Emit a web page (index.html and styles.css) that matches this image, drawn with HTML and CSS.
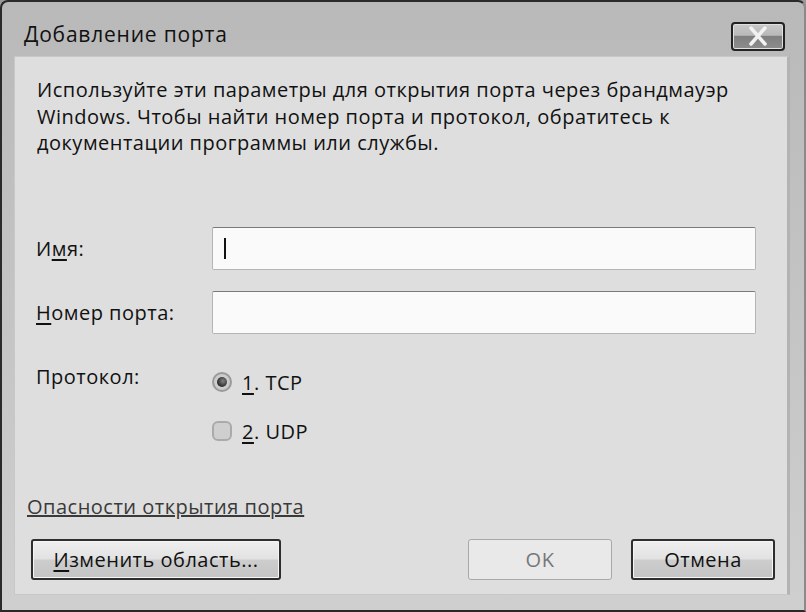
FILE: index.html
```html
<!DOCTYPE html>
<html lang="ru">
<head>
<meta charset="utf-8">
<link rel="stylesheet" href="styles.css">
</head>
<body>
<div class="window">
  <div class="titlebar">
    <div class="title">Добавление порта</div>
    <div class="close">
      <svg width="30" height="22" viewBox="0 0 30 22">
        <path d="M8 3 L22 19 M22 3 L8 19" stroke="#f2f2f2" stroke-width="3.5" fill="none" stroke-linecap="round"/>
      </svg>
    </div>
  </div>
  <div class="client">
    <p class="intro">Используйте эти параметры для открытия порта через брандмауэр<br>Windows. Чтобы найти номер порта и протокол, обратитесь к<br>документации программы или службы.</p>
    <div class="form">
      <div class="row">
        <label class="lbl">И<u>м</u>я:</label>
        <div class="input"><span class="caret"></span></div>
      </div>
      <div class="row">
        <label class="lbl"><u>Н</u>омер порта:</label>
        <div class="input"></div>
      </div>
      <div class="row proto">
        <label class="lbl">Протокол:</label>
        <div class="radios">
          <div class="radio"><span class="dot checked"></span><span><u>1</u>. TCP</span></div>
          <div class="radio"><span class="dot"></span><span><u>2</u>. UDP</span></div>
        </div>
      </div>
    </div>
    <a class="link">Опасности открытия порта</a>
    <div class="buttons">
      <button class="btn wide"><u>И</u>зменить область...</button>
      <div class="spacer"></div>
      <button class="btn disabled">OK</button>
      <button class="btn">Отмена</button>
    </div>
  </div>
</div>
</body>
</html>
```
FILE: styles.css
```css
* { box-sizing: border-box; }
html, body { margin: 0; padding: 0; }
body {
  width: 806px;
  height: 612px;
  background: #9a9a9a;
  font-family: "Open Sans", "DejaVu Sans", sans-serif;
  color: #111;
  overflow: hidden;
}
.window {
  width: 806px;
  height: 612px;
  border: 2px solid #2a2a2a;
  border-right-color: #8a8a8a;
  border-radius: 8px 8px 0 0;
  background: linear-gradient(#b9b9b9, #c6c6c6 60%, #cfcfcf);
  padding: 0 14px 15px 12px;
  display: flex;
  flex-direction: column;
}
.titlebar {
  height: 54px;
  display: flex;
  align-items: center;
  justify-content: space-between;
  padding: 0 5px 0 10px;
}
.title {
  font-size: 21px;
  letter-spacing: 0.8px;
  color: #111;
  margin-top: 10px;
}
.close {
  width: 54px;
  height: 29px;
  margin-top: 14px;
  border: 2px solid #222;
  border-radius: 4px;
  background: linear-gradient(#c9c9c9 0%, #b8b8b8 45%, #7f7f7f 50%, #8d8d8d 100%);
  display: flex;
  align-items: center;
  justify-content: center;
  box-shadow: inset 0 0 0 1px #e0e0e0;
}
.client {
  flex: 1;
  background: #dedede;
  border: 1px solid #c8c8c8;
  border-right: 3px solid #b3b3b3;
  display: flex;
  flex-direction: column;
  padding: 20px 16px 14px 16px;
  font-size: 20px;
  letter-spacing: 0.5px;
}
.intro {
  margin: 0 0 0 6px;
  line-height: 26.5px;
  white-space: nowrap;
}
.form {
  margin-top: 70px;
  display: flex;
  flex-direction: column;
  gap: 21px;
  margin-left: 5px;
}
.row {
  display: flex;
  align-items: center;
}
.lbl {
  width: 176px;
}
.input {
  width: 544px;
  height: 43px;
  background: #fafafa;
  border: 1px solid #b5b5b5;
  border-top-color: #7a7a7a;
  border-radius: 2px;
  padding: 10px 0 0 11px;
}
.caret {
  display: block;
  width: 2px;
  height: 21px;
  background: #111;
}
.proto {
  align-items: flex-start;
  margin-top: 8px;
}
.radios {
  display: flex;
  flex-direction: column;
  gap: 22px;
  margin-top: 6px;
}
.radio {
  display: flex;
  align-items: center;
  gap: 10px;
}
.dot {
  width: 20px;
  height: 20px;
  border-radius: 50%;
  border: 2px solid #9a9a9a;
  background: radial-gradient(#d8d8d8, #c4c4c4);
  position: relative;
}
.dot.checked::after {
  content: "";
  position: absolute;
  left: 3px; top: 3px;
  width: 10px; height: 10px;
  border-radius: 50%;
  background: radial-gradient(circle at 60% 40%, #777 10%, #2a2a2a 70%);
}
.radio:nth-child(2) .dot {
  border-radius: 6px;
  border-color: #aaa;
  background: #cfcfcf;
}
.link {
  margin-top: auto;
  color: #3a3a3a;
  text-decoration: underline;
  align-self: flex-start;
  margin-left: -4px;
}
.buttons {
  display: flex;
  margin-top: 19px;
  margin-left: 0;
  margin-right: -4px;
  gap: 19px;
}
.spacer { flex: 1; }
.btn {
  height: 41px;
  width: 144px;
  font-family: inherit;
  font-size: 20px;
  letter-spacing: 0.5px;
  color: #111;
  border: 2px solid #2e2e2e;
  border-radius: 3px;
  background: linear-gradient(#efefef 0%, #e2e2e2 48%, #cdcdcd 52%, #c4c4c4 100%);
  box-shadow: inset 0 0 0 1px #f6f6f6;
  padding: 0;
}
.btn.wide { width: 250px; }
.btn.disabled {
  border: 1px solid #a8a8a8;
  background: #e9e9e9;
  color: #777;
  box-shadow: none;
}
u { text-decoration-thickness: 2px; text-underline-offset: 3px; }
```
